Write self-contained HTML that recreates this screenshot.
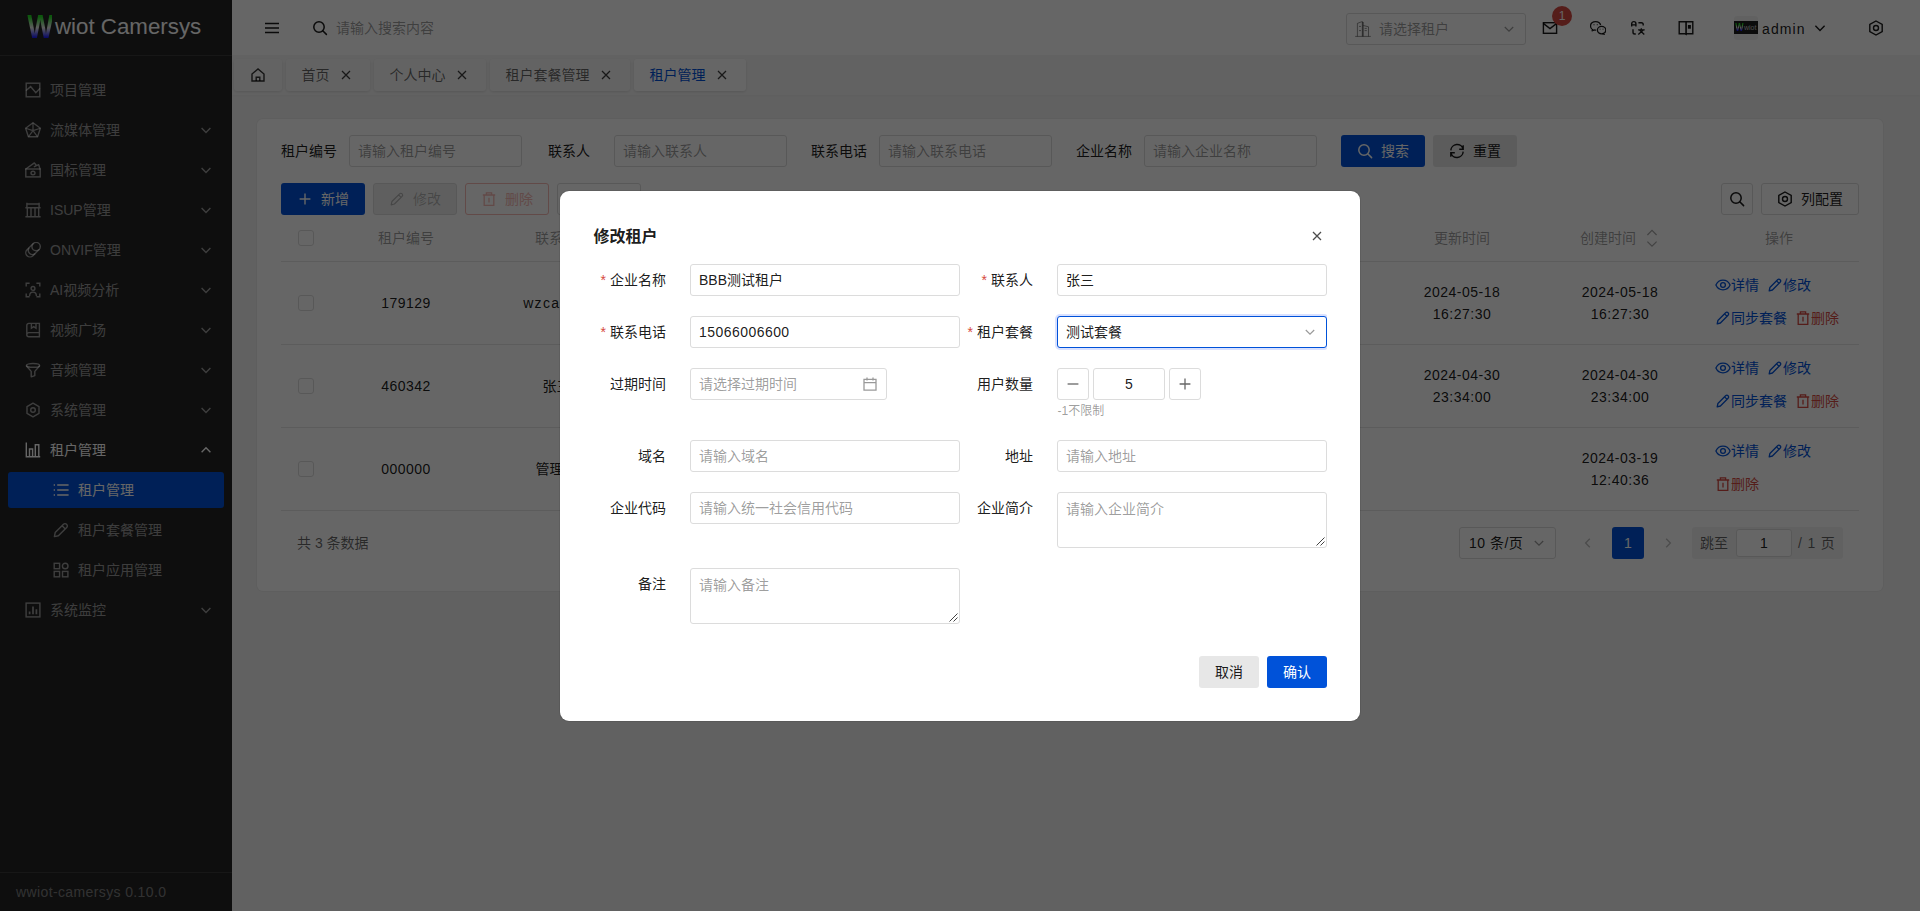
<!DOCTYPE html>
<html lang="zh-CN">
<head>
<meta charset="utf-8">
<title>租户管理 - wwiot Camersys</title>
<style>
*{box-sizing:border-box;margin:0;padding:0}
html,body{width:1920px;height:911px;overflow:hidden}
body{font-family:"Liberation Sans","Noto Sans CJK SC",sans-serif;font-size:14px;line-height:22px;color:rgba(0,0,0,.9);background:#f3f3f3;position:relative}
svg{display:block}
.abs{position:absolute}
/* ---------- sidebar ---------- */
#side{position:absolute;left:0;top:0;width:232px;height:911px;background:#242424;color:rgba(255,255,255,.55)}
#logo{position:absolute;left:0;top:0;width:232px;height:56px;border-bottom:1px solid #3a3a3a}
#logo .w{position:absolute;left:25px;top:7px;width:30px;height:40px;font-size:33px;line-height:40px;font-weight:bold;text-align:center;transform:scaleX(.84);transform-origin:14px 50%;background:linear-gradient(#22dd22 24%,#e8e8e8 52%,#0000ff 80%);-webkit-background-clip:text;background-clip:text;color:transparent}
#logo .t{position:absolute;left:55px;top:11px;font-size:22.3px;line-height:32px;color:#fff;white-space:nowrap}
.mi{position:absolute;left:8px;width:216px;height:36px;border-radius:3px}
.mi .ic{position:absolute;left:17px;top:10px;width:16px;height:16px}
.mi .tx{position:absolute;left:42px;top:7px;line-height:22px;white-space:nowrap}
.mi .ar{position:absolute;left:190px;top:10px;width:16px;height:16px}
.mi.sub .ic{left:45px}
.mi.sub .tx{left:70px}
.mi.on{background:#0052d9;color:#fff}
.mi.open{color:#fff}
#sfoot{position:absolute;left:0;top:872px;width:232px;height:39px;border-top:1px solid #3a3a3a;padding-left:16px;line-height:38px;color:rgba(255,255,255,.42);letter-spacing:.38px}
/* ---------- header ---------- */
#head{position:absolute;left:232px;top:0;width:1688px;height:55px;background:#fff}
#head .ph{position:absolute;left:104px;top:17px;line-height:22px;color:rgba(0,0,0,.4)}
#tsel{position:absolute;left:1114px;top:13px;width:180px;height:32px;border:1px solid #dcdcdc;border-radius:3px}
#tsel .ph2{position:absolute;left:32px;top:4px;line-height:22px;color:rgba(0,0,0,.4)}
#badge{position:absolute;left:1320px;top:6px;width:20px;height:20px;border-radius:10px;background:#d54941;color:#fff;font-size:12px;line-height:20px;text-align:center}
#avatar{position:absolute;left:1502px;top:16px;width:24px;height:24px;border-radius:3px;background:#f3f3f3;overflow:hidden}
#avatar i{position:absolute;left:0;top:5px;width:24px;height:13px;background:#1c1c1c;display:block}
#avatar b{position:absolute;left:0;top:5px;width:11px;text-align:center;font-size:11px;line-height:13px;font-weight:bold;font-style:normal;transform:scaleX(.8);transform-origin:5.5px 50%;background:linear-gradient(#22dd22 25%,#e8e8e8 50%,#0000ff 78%);-webkit-background-clip:text;background-clip:text;color:transparent}
#avatar em{position:absolute;left:10px;top:5px;font-size:7px;line-height:14px;color:#c4c4c4;font-style:normal}
#uname{position:absolute;left:1530px;top:17.5px;line-height:22px;letter-spacing:1.1px}
/* ---------- tabs ---------- */
#tabs{position:absolute;left:232px;top:55px;width:1688px;height:40px;background:#f6f6f6;box-shadow:0 1px 2px rgba(0,0,0,.04)}
.tab{position:absolute;top:4px;height:32px;background:#f8f8f8;border-radius:3px;box-shadow:0 1px 3px rgba(0,0,0,.12);color:rgba(0,0,0,.6);white-space:nowrap}
.tab span{position:absolute;left:15.5px;top:5px;line-height:22px}
.tab svg{position:absolute;right:16px;top:8px}
.tab.on{background:#fff;color:#0052d9}
/* ---------- card ---------- */
#card{position:absolute;left:257px;top:119px;width:1626px;height:472px;background:#fff;border-radius:6px;box-shadow:0 0 0 1px rgba(0,0,0,.03)}
.lb{position:absolute;top:21px;line-height:22px;white-space:nowrap}
.inp{position:absolute;height:32px;border:1px solid #dcdcdc;border-radius:3px;background:#fff;padding:4px 8px;line-height:22px;color:rgba(0,0,0,.4);white-space:nowrap;overflow:hidden}
.btn{position:absolute;height:32px;border-radius:3px;border:1px solid transparent;line-height:22px;white-space:nowrap}
.btn svg{position:absolute;left:15px;top:7px}
.btn span{position:absolute;left:39px;top:4px}
.btn.pri{background:#0052d9;color:#fff}
.btn.gray{background:#e7e7e7}
.btn.dis{background:#eee;color:rgba(0,0,0,.26);border-color:#dcdcdc}
.btn.dng{background:#fff;color:#f6b8b3;border-color:#f6b8b3}
.btn.out{background:#fff;border-color:#dcdcdc}
.th{position:absolute;top:108px;line-height:22px;color:rgba(0,0,0,.4);white-space:nowrap;transform:translateX(-50%)}
.hl{position:absolute;left:24px;width:1578px;height:1px;background:#e7e7e7}
.cb{position:absolute;left:41px;width:16px;height:16px;border:1px solid #dcdcdc;border-radius:3px;background:#fff}
.td{position:absolute;line-height:22px;text-align:center;white-space:nowrap;transform:translateX(-50%);letter-spacing:.5px}
.tl{position:absolute;line-height:22px;white-space:nowrap}
.op{position:absolute;height:22px;line-height:22px;white-space:nowrap;color:#0052d9}
.op svg{position:absolute;left:0;top:3px}
.op span{position:absolute;left:16px;top:0}
.op.red{color:#d54941}
/* ---------- overlay & dialog ---------- */
#mask{position:absolute;left:0;top:0;width:1920px;height:911px;background:rgba(0,0,0,.6)}
#dlg{position:absolute;left:560px;top:191px;width:800px;height:530px;background:#fff;border-radius:9px;box-shadow:0 0 0 1px rgba(0,0,0,.08)}
#dlg h3{position:absolute;left:33.5px;top:33.5px;font-size:16px;line-height:24px;font-weight:bold}
.fl{position:absolute;line-height:22px;text-align:right;white-space:nowrap}
.fl i{font-style:normal;color:#d54941;margin-right:4px;position:relative;top:0}
.fi{position:absolute;height:32px;border:1px solid #dcdcdc;border-radius:3px;background:#fff;padding:4px 8px;line-height:22px;white-space:nowrap}
.fi.ph,.ta{color:rgba(0,0,0,.4)}
.ta{position:absolute;width:270px;height:56px;border:1px solid #dcdcdc;border-radius:3px;background:#fff;padding:5px 8px;line-height:22px}
.ta svg{position:absolute;right:1px;bottom:1px}
</style>
</head>
<body>
<div id="side">
<div id="logo"><span class="w">W</span><span class="t">wiot Camersys</span></div>
<div class="mi" style="top:72px"><svg class="ic" width="16" height="16" viewBox="0 0 16 16" fill="none" stroke="currentColor" stroke-width="1.4" stroke-linejoin="round" stroke-linecap="round"><rect x="1.2" y="1.2" width="13.6" height="13.6" stroke-linejoin="miter"/><path d="M1.4 8.200 5.600 4.600 10.800 10.800 14.600 6.800" stroke-linejoin="miter"/></svg><span class="tx">项目管理</span></div>
<div class="mi" style="top:112px"><svg class="ic" width="16" height="16" viewBox="0 0 16 16" fill="none" stroke="currentColor" stroke-width="1.4" stroke-linejoin="round" stroke-linecap="round"><path d="M8 .8 15.400 6.200 12.600 14.800H3.400L.600 6.200Z"/><path d="M8 8.600V.8M8 8.600 15.400 6.200M8 8.600 12.600 14.800M8 8.600 3.400 14.800M8 8.600.600 6.200" stroke-width="1.200" stroke-linecap="butt"/></svg><span class="tx">流媒体管理</span><svg class="ar" width="16" height="16" viewBox="0 0 16 16" fill="none" stroke="currentColor" stroke-width="1.4" stroke-linejoin="round" stroke-linecap="round"><path d="M3.6 6 8 10.4 12.4 6" stroke-linecap="butt" stroke-linejoin="miter"/></svg></div>
<div class="mi" style="top:152px"><svg class="ic" width="16" height="16" viewBox="0 0 16 16" fill="none" stroke="currentColor" stroke-width="1.4" stroke-linejoin="round" stroke-linecap="round"><rect x=".8" y="7" width="14.400" height="7.900" stroke-linejoin="miter"/><path d="M.800 7 9.400.900 11.300 3.500M9.400 4.700 13.700 2.700 15 7"/><ellipse cx="8" cy="11" rx="2" ry="1.800"/></svg><span class="tx">国标管理</span><svg class="ar" width="16" height="16" viewBox="0 0 16 16" fill="none" stroke="currentColor" stroke-width="1.4" stroke-linejoin="round" stroke-linecap="round"><path d="M3.6 6 8 10.4 12.4 6" stroke-linecap="butt" stroke-linejoin="miter"/></svg></div>
<div class="mi" style="top:192px"><svg class="ic" width="16" height="16" viewBox="0 0 16 16" fill="none" stroke="currentColor" stroke-width="1.4" stroke-linejoin="round" stroke-linecap="round"><path d="M1.900.800V5.600M14.100.800V5.600M1.900 2h12.200M.400 5.700h15.200M.400 14.800h15.200M2.300 5.700v9.100M6 5.700v9.100M10 5.700v9.100M13.700 5.700v9.100" stroke-linecap="butt"/></svg><span class="tx">ISUP管理</span><svg class="ar" width="16" height="16" viewBox="0 0 16 16" fill="none" stroke="currentColor" stroke-width="1.4" stroke-linejoin="round" stroke-linecap="round"><path d="M3.6 6 8 10.4 12.4 6" stroke-linecap="butt" stroke-linejoin="miter"/></svg></div>
<div class="mi" style="top:232px"><svg class="ic" width="16" height="16" viewBox="0 0 16 16" fill="none" stroke="currentColor" stroke-width="1.4" stroke-linejoin="round" stroke-linecap="round"><circle cx="11.100" cy="4.600" r="4.200"/><path d="M8.130 1.630 2.030 7.730A4.200 4.200 0 0 0 7.970 13.670L14.070 7.570"/><path d="M3.830 6.330a4.200 4.200 0 0 0 5.940 5.540"/></svg><span class="tx">ONVIF管理</span><svg class="ar" width="16" height="16" viewBox="0 0 16 16" fill="none" stroke="currentColor" stroke-width="1.4" stroke-linejoin="round" stroke-linecap="round"><path d="M3.6 6 8 10.4 12.4 6" stroke-linecap="butt" stroke-linejoin="miter"/></svg></div>
<div class="mi" style="top:272px"><svg class="ic" width="16" height="16" viewBox="0 0 16 16" fill="none" stroke="currentColor" stroke-width="1.4" stroke-linejoin="round" stroke-linecap="round"><path d="M1.200 4.600V1.200h3.400M11.400 1.200h3.400v3.400M14.800 11.400v3.400h-3.400M4.600 14.800H1.200v-3.400" stroke-linejoin="miter" stroke-linecap="butt"/><circle cx="8" cy="6.400" r="1.900"/><path d="M4.700 13.400a3.300 3.300 0 0 1 6.600 0"/></svg><span class="tx">AI视频分析</span><svg class="ar" width="16" height="16" viewBox="0 0 16 16" fill="none" stroke="currentColor" stroke-width="1.4" stroke-linejoin="round" stroke-linecap="round"><path d="M3.6 6 8 10.4 12.4 6" stroke-linecap="butt" stroke-linejoin="miter"/></svg></div>
<div class="mi" style="top:312px"><svg class="ic" width="16" height="16" viewBox="0 0 16 16" fill="none" stroke="currentColor" stroke-width="1.4" stroke-linejoin="round" stroke-linecap="round"><path d="M1.800 3.400a2 2 0 0 1 2-2h10.600v13.400H3.800a2 2 0 0 1-2-2ZM1.800 12.600a2 2 0 0 1 2-2h10.600M6.400 1.400v4.800l2.300-1.600 2.300 1.600V1.400" stroke-linejoin="miter"/></svg><span class="tx">视频广场</span><svg class="ar" width="16" height="16" viewBox="0 0 16 16" fill="none" stroke="currentColor" stroke-width="1.4" stroke-linejoin="round" stroke-linecap="round"><path d="M3.6 6 8 10.4 12.4 6" stroke-linecap="butt" stroke-linejoin="miter"/></svg></div>
<div class="mi" style="top:352px"><svg class="ic" width="16" height="16" viewBox="0 0 16 16" fill="none" stroke="currentColor" stroke-width="1.4" stroke-linejoin="round" stroke-linecap="round"><ellipse cx="8" cy="3.400" rx="6.600" ry="1.900"/><path d="M1.500 4 6.200 9.400V14.800L9.800 13.600V9.400L14.500 4"/></svg><span class="tx">音频管理</span><svg class="ar" width="16" height="16" viewBox="0 0 16 16" fill="none" stroke="currentColor" stroke-width="1.4" stroke-linejoin="round" stroke-linecap="round"><path d="M3.6 6 8 10.4 12.4 6" stroke-linecap="butt" stroke-linejoin="miter"/></svg></div>
<div class="mi" style="top:392px"><svg class="ic" width="16" height="16" viewBox="0 0 16 16" fill="none" stroke="currentColor" stroke-width="1.4" stroke-linejoin="round" stroke-linecap="round"><path d="M8 1.2 14 4.6v6.8L8 14.8 2 11.4V4.6Z"/><circle cx="8" cy="8" r="2.3"/></svg><span class="tx">系统管理</span><svg class="ar" width="16" height="16" viewBox="0 0 16 16" fill="none" stroke="currentColor" stroke-width="1.4" stroke-linejoin="round" stroke-linecap="round"><path d="M3.6 6 8 10.4 12.4 6" stroke-linecap="butt" stroke-linejoin="miter"/></svg></div>
<div class="mi open" style="top:432px"><svg class="ic" width="16" height="16" viewBox="0 0 16 16" fill="none" stroke="currentColor" stroke-width="1.4" stroke-linejoin="round" stroke-linecap="round"><path d="M1.300.400V14.800H15.200" stroke-linejoin="miter" stroke-linecap="butt"/><path d="M4.500 14.800V7h3.100v7.800M10.300 14.800V2.800h3.500v12" stroke-linejoin="miter" stroke-linecap="butt"/></svg><span class="tx">租户管理</span><svg class="ar" width="16" height="16" viewBox="0 0 16 16" fill="none" stroke="currentColor" stroke-width="1.4" stroke-linejoin="round" stroke-linecap="round"><path d="M3.6 10.2 8 5.8 12.4 10.2" stroke-linecap="butt" stroke-linejoin="miter"/></svg></div>
<div class="mi sub on" style="top:472px"><svg class="ic" width="16" height="16" viewBox="0 0 16 16" fill="none" stroke="currentColor" stroke-width="1.4" stroke-linejoin="round" stroke-linecap="round"><path d="M4.200 3h11.400M4.200 8h11.400M4.200 13h11.400M.700 3h1.300M.700 8h1.300M.700 13h1.300" stroke-linecap="butt"/></svg><span class="tx">租户管理</span></div>
<div class="mi sub" style="top:512px"><svg class="ic" width="16" height="16" viewBox="0 0 16 16" fill="none" stroke="currentColor" stroke-width="1.4" stroke-linejoin="round" stroke-linecap="round"><path d="M1.400 14.600 2.200 10.600 10.500 2.300a2.100 2.100 0 0 1 3 0l.200.200a2.100 2.100 0 0 1 0 3L5.400 13.800ZM9.100 3.700 12.300 6.900"/></svg><span class="tx">租户套餐管理</span></div>
<div class="mi sub" style="top:552px"><svg class="ic" width="16" height="16" viewBox="0 0 16 16" fill="none" stroke="currentColor" stroke-width="1.4" stroke-linejoin="round" stroke-linecap="round"><rect x="1.200" y="1.300" width="5.400" height="5.400" stroke-linejoin="miter"/><circle cx="12.200" cy="4" r="2.800"/><rect x="1.200" y="9.400" width="5.400" height="5.400" stroke-linejoin="miter"/><rect x="9.500" y="9.400" width="5.400" height="5.400" stroke-linejoin="miter"/></svg><span class="tx">租户应用管理</span></div>
<div class="mi" style="top:592px"><svg class="ic" width="16" height="16" viewBox="0 0 16 16" fill="none" stroke="currentColor" stroke-width="1.4" stroke-linejoin="round" stroke-linecap="round"><rect x="1.100" y="1.100" width="13.800" height="13.800" stroke-linejoin="miter"/><path d="M4.600 12.200V9.400M8 12.200V4.400M11.400 12.200V7.200" stroke-linecap="butt" stroke-width="1.700"/></svg><span class="tx">系统监控</span><svg class="ar" width="16" height="16" viewBox="0 0 16 16" fill="none" stroke="currentColor" stroke-width="1.4" stroke-linejoin="round" stroke-linecap="round"><path d="M3.6 6 8 10.4 12.4 6" stroke-linecap="butt" stroke-linejoin="miter"/></svg></div>
<div id="sfoot">wwiot-camersys 0.10.0</div>
</div>
<div id="head">
<svg class="abs" style="left:31.5px;top:20px;color:rgba(0,0,0,.9)" width="16" height="16" viewBox="0 0 16 16" fill="none" stroke="currentColor" stroke-width="1.5" stroke-linejoin="round" stroke-linecap="round" ><path d="M1 3.6h14M1 8h14M1 12.4h14" stroke-linecap="butt"/></svg>
<svg class="abs" style="left:79.5px;top:20px;color:rgba(0,0,0,.9)" width="16" height="16" viewBox="0 0 16 16" fill="none" stroke="currentColor" stroke-width="1.5" stroke-linejoin="round" stroke-linecap="round" ><circle cx="7" cy="7" r="5.2"/><path d="M11 11 14.4 14.400"/></svg>
<span class="ph">请输入搜索内容</span>
<div id="tsel"><svg class="abs" style="left:8px;top:7px;color:rgba(0,0,0,.42)" width="16" height="16" viewBox="0 0 16 16" fill="none" stroke="currentColor" stroke-width="1" stroke-linejoin="round" stroke-linecap="round" ><path d="M.2 15.4h15.6M2.4 15.4V2.4L7 .6 8 1v14.400M8.400 4.500l5.100 1.300v9.600" stroke-linecap="butt"/><path d="M7.600 1v14.400" stroke-width="1.600" stroke-linecap="butt"/><path d="M4 5.400h2M4 9.600h2M9.600 7.400h2.200M9.600 9.600h2.200" stroke-width="1" stroke-linecap="butt"/></svg><span class="ph2">请选择租户</span><svg class="abs" style="left:154px;top:7px;color:rgba(0,0,0,.4)" width="16" height="16" viewBox="0 0 16 16" fill="none" stroke="currentColor" stroke-width="1.2" stroke-linejoin="round" stroke-linecap="round" ><path d="M3.8 6 8 10.2 12.2 6" stroke-linecap="butt" stroke-linejoin="miter"/></svg></div>
<svg class="abs" style="left:1310px;top:20px;color:rgba(0,0,0,.9)" width="16" height="16" viewBox="0 0 16 16" fill="none" stroke="currentColor" stroke-width="1.4" stroke-linejoin="round" stroke-linecap="round" ><rect x="1.4" y="2.7" width="13.2" height="10.6" stroke-linejoin="miter"/><path d="M1.6 3.6 8 8.6 14.4 3.6" stroke-linejoin="miter"/></svg>
<div id="badge">1</div>
<svg class="abs" style="left:1358px;top:20px;color:rgba(0,0,0,.9)" width="16" height="16" viewBox="0 0 16 16" fill="none" stroke="currentColor" stroke-width="1.3" stroke-linejoin="round" stroke-linecap="round" ><ellipse cx="5.600" cy="5.900" rx="5.100" ry="4.300"/><path d="M2.500 9.400 1.900 11.100 4.200 10.100" stroke-width="1" fill="#fff"/><ellipse cx="11.600" cy="10.100" rx="4.300" ry="3.800" fill="#fff" stroke="#fff" stroke-width="2.600"/><ellipse cx="11.600" cy="10.100" rx="4.200" ry="3.700" fill="#fff"/><path d="M13.400 13.400 14.500 14.500 12.400 13.800" stroke-width="1" fill="#fff"/><path d="M4 4.300v.9M7.300 4.300v.9M10.100 8.700v.9M13 8.700v.9" stroke-width="1.200" stroke="rgba(0,0,0,.75)" stroke-linecap="butt"/></svg>
<svg class="abs" style="left:1398px;top:20px;color:rgba(0,0,0,.9)" width="16" height="16" viewBox="0 0 16 16" fill="none" stroke="currentColor" stroke-width="1.4" stroke-linejoin="round" stroke-linecap="round" ><path d="M1.700 6.600V3.700a2.100 2.100 0 0 1 4.200 0V6.600M1.700 4.900h4.200M8.400 2.800h3a1.800 1.800 0 0 1 1.800 1.800v.9M3 9.300v2.900a1.800 1.800 0 0 0 1.800 1.800h1" stroke-linecap="butt" stroke-linejoin="miter"/><path d="M8.100 9.800h6.600M11.300 8.300v1.300M9.500 10 14.300 14.500M13.300 10 8.300 14.500" stroke-linecap="butt" stroke-width="1.300"/></svg>
<svg class="abs" style="left:1446px;top:20px;color:rgba(0,0,0,.9)" width="16" height="16" viewBox="0 0 16 16" fill="none" stroke="currentColor" stroke-width="1.4" stroke-linejoin="round" stroke-linecap="round" ><path d="M1.200 1.700H8V14.300L6.800 13.700H1.200ZM8 1.700h6.800v12H9.200L8 14.300" stroke-linejoin="miter"/><path d="M8.300 1.700v12.400" stroke-width="1.100" stroke="rgba(0,0,0,.55)"/><rect x="9.900" y="5" width="3" height="3.700" fill="currentColor" stroke="none"/></svg>
<div id="avatar"><i></i><b>W</b><em>wiot</em></div><span id="uname">admin</span>
<svg class="abs" style="left:1580px;top:20px;color:rgba(0,0,0,.9)" width="16" height="16" viewBox="0 0 16 16" fill="none" stroke="currentColor" stroke-width="1.4" stroke-linejoin="round" stroke-linecap="round" ><path d="M3.400 5.800 8 10.400 12.600 5.800" stroke-linecap="butt" stroke-linejoin="miter"/></svg>
<svg class="abs" style="left:1636px;top:20px;color:rgba(0,0,0,.9)" width="16" height="16" viewBox="0 0 16 16" fill="none" stroke="currentColor" stroke-width="1.4" stroke-linejoin="round" stroke-linecap="round" ><path d="M8 1 14.200 4.500v7L8 15 1.800 11.500v-7Z" stroke-linejoin="miter"/><circle cx="8" cy="8" r="2.500"/></svg>
</div>
<div id="tabs">
<div class="tab" style="left:2px;width:48px"><svg style="left:16px;right:auto" width="16" height="16" viewBox="0 0 16 16" fill="none" stroke="rgba(0,0,0,.8)" stroke-width="1.400"><path d="M2 7 8 2 14 7v7H2Z" stroke-linejoin="miter"/><path d="M6.200 14v-3.800h3.600V14"/></svg></div>
<div class="tab" style="left:54px;width:84px"><span>首页</span><svg width="16" height="16" viewBox="0 0 16 16" fill="none" stroke="rgba(0,0,0,.75)" stroke-width="1.300"><path d="M4 4 12 12M12 4 4 12"/></svg></div>
<div class="tab" style="left:142px;width:112px"><span>个人中心</span><svg width="16" height="16" viewBox="0 0 16 16" fill="none" stroke="rgba(0,0,0,.75)" stroke-width="1.300"><path d="M4 4 12 12M12 4 4 12"/></svg></div>
<div class="tab" style="left:258px;width:140px"><span>租户套餐管理</span><svg width="16" height="16" viewBox="0 0 16 16" fill="none" stroke="rgba(0,0,0,.75)" stroke-width="1.300"><path d="M4 4 12 12M12 4 4 12"/></svg></div>
<div class="tab on" style="left:402px;width:112px"><span>租户管理</span><svg width="16" height="16" viewBox="0 0 16 16" fill="none" stroke="rgba(0,0,0,.75)" stroke-width="1.300"><path d="M4 4 12 12M12 4 4 12"/></svg></div>
</div>
<div id="card">
<span class="lb" style="left:24px">租户编号</span><div class="inp" style="left:92px;top:16px;width:173px">请输入租户编号</div>
<span class="lb" style="left:291px">联系人</span><div class="inp" style="left:357px;top:16px;width:173px">请输入联系人</div>
<span class="lb" style="left:554px">联系电话</span><div class="inp" style="left:622px;top:16px;width:173px">请输入联系电话</div>
<span class="lb" style="left:819px">企业名称</span><div class="inp" style="left:887px;top:16px;width:173px">请输入企业名称</div>
<div class="btn pri" style="left:1084px;top:16px;width:84px"><svg width="16" height="16" viewBox="0 0 16 16" fill="none" stroke="currentColor" stroke-width="1.5" stroke-linejoin="round" stroke-linecap="round"><circle cx="7" cy="7" r="5.2"/><path d="M11 11 14.600 14.600"/></svg><span>搜索</span></div>
<div class="btn gray" style="left:1176px;top:16px;width:84px"><svg width="16" height="16" viewBox="0 0 16 16" fill="none" stroke="currentColor" stroke-width="1.4" stroke-linejoin="round" stroke-linecap="round"><path d="M14.200 6.300A6.300 6.300 0 0 0 1.800 7.400M1.800 9.700A6.300 6.300 0 0 0 14.200 8.600M14.200 2.300v4h-4M1.800 13.700v-4h4" stroke-linejoin="miter" stroke-linecap="butt"/></svg><span>重置</span></div>
<div class="btn pri" style="left:24px;top:64px;width:84px"><svg width="16" height="16" viewBox="0 0 16 16" fill="none" stroke="currentColor" stroke-width="1.4" stroke-linejoin="round" stroke-linecap="round"><path d="M8 2.600v10.800M2.600 8h10.800" stroke-linecap="butt"/></svg><span>新增</span></div>
<div class="btn dis" style="left:116px;top:64px;width:84px"><svg width="16" height="16" viewBox="0 0 16 16" fill="none" stroke="currentColor" stroke-width="1.2" stroke-linejoin="round" stroke-linecap="round"><path d="M2.200 13.800l.700-3.300 7.700-7.700a1.700 1.700 0 0 1 2.500 2.500l-7.700 7.700ZM9.600 3.900l2.500 2.500"/></svg><span>修改</span></div>
<div class="btn dng" style="left:208px;top:64px;width:84px"><svg width="16" height="16" viewBox="0 0 16 16" fill="none" stroke="currentColor" stroke-width="1.3" stroke-linejoin="round" stroke-linecap="round"><path d="M1.800 4h12.400M5.400 4V1.800h5.200V4M3.200 4v10.400h9.600V4M8 6.800v4.800" stroke-linejoin="miter" stroke-linecap="butt"/></svg><span>删除</span></div>
<div class="btn out" style="left:300px;top:64px;width:84px"><svg width="16" height="16" viewBox="0 0 16 16" fill="none" stroke="currentColor" stroke-width="1.3" stroke-linejoin="round" stroke-linecap="round"><path d="M8 2v8M4.600 7 8 10.400 11.400 7M2.400 13.600h11.200" stroke-linecap="butt" stroke-linejoin="miter"/></svg><span>导出</span></div>
<div class="btn out" style="left:1464px;top:64px;width:32px"><svg style="left:7px" width="16" height="16" viewBox="0 0 16 16" fill="none" stroke="currentColor" stroke-width="1.5" stroke-linejoin="round" stroke-linecap="round"><circle cx="7" cy="7" r="5.2"/><path d="M11 11 14.600 14.600"/></svg></div>
<div class="btn out" style="left:1504px;top:64px;width:98px"><svg width="16" height="16" viewBox="0 0 16 16" fill="none" stroke="currentColor" stroke-width="1.4" stroke-linejoin="round" stroke-linecap="round"><path d="M8 1 14.200 4.500v7L8 15 1.800 11.500v-7Z" stroke-linejoin="miter"/><circle cx="8" cy="8" r="2.500"/></svg><span>列配置</span></div>
<div class="cb" style="top:111px"></div>
<span class="th" style="left:149px">租户编号</span>
<span class="th" style="left:299px">联系人</span>
<span class="th" style="left:449px">联系电话</span>
<span class="th" style="left:599px">企业名称</span>
<span class="th" style="left:749px">租户套餐</span>
<span class="th" style="left:899px">过期时间</span>
<span class="th" style="left:1049px">用户数量</span>
<span class="th" style="left:1205px">更新时间</span>
<span class="th" style="left:1351px">创建时间</span>
<span class="th" style="left:1522px">操作</span>
<svg class="abs" style="left:1387px;top:109px" width="16" height="20" viewBox="0 0 16 20" fill="none" stroke="rgba(0,0,0,.35)" stroke-width="1.200"><path d="M3.400 7 8 2.400 12.600 7M3.400 13.600 8 18.200 12.600 13.600"/></svg>
<div class="hl" style="top:142px"></div>
<div class="cb" style="top:176px"></div>
<span class="td" style="left:149px;top:173px">179129</span>
<span class="td" style="left:302.5px;top:173px;letter-spacing:1.3px">wzcaoyan</span>
<span class="td" style="left:449px;top:173px;letter-spacing:0">13800138000</span>
<span class="td" style="left:599px;top:173px;letter-spacing:0">AAA测试租户</span>
<span class="td" style="left:749px;top:173px;letter-spacing:0">测试套餐</span>
<span class="td" style="left:899px;top:173px;letter-spacing:0">2025-05-18</span>
<span class="td" style="left:1049px;top:173px;letter-spacing:0">10</span>
<span class="td" style="left:1205px;top:162px">2024-05-18<br>16:27:30</span>
<span class="td" style="left:1363px;top:162px">2024-05-18<br>16:27:30</span>
<a class="op" style="left:1458px;top:155px;width:44px"><svg width="16" height="16" viewBox="0 0 16 16" fill="none" stroke="currentColor" stroke-width="1.3" stroke-linejoin="round" stroke-linecap="round"><path d="M.900 8C2.400 4.800 5 3.200 8 3.200S13.600 4.800 15.100 8C13.600 11.200 11 12.800 8 12.800S2.400 11.200.900 8Z"/><circle cx="8" cy="8" r="2.400"/></svg><span>详情</span></a>
<a class="op" style="left:1510px;top:155px;width:44px"><svg width="16" height="16" viewBox="0 0 16 16" fill="none" stroke="currentColor" stroke-width="1.3" stroke-linejoin="round" stroke-linecap="round"><path d="M2.200 13.800l.700-3.300 7.700-7.700a1.700 1.700 0 0 1 2.500 2.500l-7.700 7.700ZM9.600 3.900l2.500 2.500"/></svg><span>修改</span></a>
<a class="op" style="left:1458px;top:188px;width:72px"><svg width="16" height="16" viewBox="0 0 16 16" fill="none" stroke="currentColor" stroke-width="1.3" stroke-linejoin="round" stroke-linecap="round"><path d="M2.200 13.800l.700-3.300 7.700-7.700a1.700 1.700 0 0 1 2.500 2.500l-7.700 7.700ZM9.600 3.900l2.500 2.500"/></svg><span>同步套餐</span></a>
<a class="op red" style="left:1538px;top:188px;width:44px"><svg width="16" height="16" viewBox="0 0 16 16" fill="none" stroke="currentColor" stroke-width="1.3" stroke-linejoin="round" stroke-linecap="round"><path d="M1.800 4h12.400M5.400 4V1.800h5.200V4M3.200 4v10.400h9.600V4M8 6.800v4.800" stroke-linejoin="miter" stroke-linecap="butt"/></svg><span>删除</span></a>
<div class="hl" style="top:225px"></div>
<div class="cb" style="top:259px"></div>
<span class="td" style="left:149px;top:256px">460342</span>
<span class="td" style="left:299.5px;top:256px;letter-spacing:0">张三</span>
<span class="td" style="left:449px;top:256px;letter-spacing:0">15066006600</span>
<span class="td" style="left:599px;top:256px;letter-spacing:0">BBB测试租户</span>
<span class="td" style="left:749px;top:256px;letter-spacing:0">测试套餐</span>
<span class="td" style="left:1049px;top:256px;letter-spacing:0">5</span>
<span class="td" style="left:1205px;top:245px">2024-04-30<br>23:34:00</span>
<span class="td" style="left:1363px;top:245px">2024-04-30<br>23:34:00</span>
<a class="op" style="left:1458px;top:238px;width:44px"><svg width="16" height="16" viewBox="0 0 16 16" fill="none" stroke="currentColor" stroke-width="1.3" stroke-linejoin="round" stroke-linecap="round"><path d="M.900 8C2.400 4.800 5 3.200 8 3.200S13.600 4.800 15.100 8C13.600 11.200 11 12.800 8 12.800S2.400 11.200.900 8Z"/><circle cx="8" cy="8" r="2.400"/></svg><span>详情</span></a>
<a class="op" style="left:1510px;top:238px;width:44px"><svg width="16" height="16" viewBox="0 0 16 16" fill="none" stroke="currentColor" stroke-width="1.3" stroke-linejoin="round" stroke-linecap="round"><path d="M2.200 13.800l.700-3.300 7.700-7.700a1.700 1.700 0 0 1 2.500 2.500l-7.700 7.700ZM9.600 3.900l2.500 2.500"/></svg><span>修改</span></a>
<a class="op" style="left:1458px;top:271px;width:72px"><svg width="16" height="16" viewBox="0 0 16 16" fill="none" stroke="currentColor" stroke-width="1.3" stroke-linejoin="round" stroke-linecap="round"><path d="M2.200 13.800l.700-3.300 7.700-7.700a1.700 1.700 0 0 1 2.500 2.500l-7.700 7.700ZM9.600 3.900l2.500 2.500"/></svg><span>同步套餐</span></a>
<a class="op red" style="left:1538px;top:271px;width:44px"><svg width="16" height="16" viewBox="0 0 16 16" fill="none" stroke="currentColor" stroke-width="1.3" stroke-linejoin="round" stroke-linecap="round"><path d="M1.800 4h12.400M5.400 4V1.800h5.200V4M3.200 4v10.400h9.600V4M8 6.800v4.800" stroke-linejoin="miter" stroke-linecap="butt"/></svg><span>删除</span></a>
<div class="hl" style="top:308px"></div>
<div class="cb" style="top:342px"></div>
<span class="td" style="left:149px;top:339px">000000</span>
<span class="td" style="left:299.5px;top:339px;letter-spacing:0">管理员</span>
<span class="td" style="left:599px;top:339px;letter-spacing:0">管理组</span>
<span class="td" style="left:1363px;top:328px">2024-03-19<br>12:40:36</span>
<a class="op" style="left:1458px;top:321px;width:44px"><svg width="16" height="16" viewBox="0 0 16 16" fill="none" stroke="currentColor" stroke-width="1.3" stroke-linejoin="round" stroke-linecap="round"><path d="M.900 8C2.400 4.800 5 3.200 8 3.200S13.600 4.800 15.100 8C13.600 11.200 11 12.800 8 12.800S2.400 11.200.900 8Z"/><circle cx="8" cy="8" r="2.400"/></svg><span>详情</span></a>
<a class="op" style="left:1510px;top:321px;width:44px"><svg width="16" height="16" viewBox="0 0 16 16" fill="none" stroke="currentColor" stroke-width="1.3" stroke-linejoin="round" stroke-linecap="round"><path d="M2.200 13.800l.700-3.300 7.700-7.700a1.700 1.700 0 0 1 2.500 2.500l-7.700 7.700ZM9.600 3.900l2.500 2.500"/></svg><span>修改</span></a>
<a class="op red" style="left:1458px;top:354px;width:44px"><svg width="16" height="16" viewBox="0 0 16 16" fill="none" stroke="currentColor" stroke-width="1.3" stroke-linejoin="round" stroke-linecap="round"><path d="M1.800 4h12.400M5.400 4V1.800h5.200V4M3.200 4v10.400h9.600V4M8 6.800v4.800" stroke-linejoin="miter" stroke-linecap="butt"/></svg><span>删除</span></a>
<div class="hl" style="top:391px"></div>
<span class="tl" style="left:40px;top:413px;color:rgba(0,0,0,.6)">共 3 条数据</span>
<div class="inp" style="left:1202px;top:408px;width:97px;color:rgba(0,0,0,.9);padding-left:9px;letter-spacing:.5px">10 条/页<svg style="position:absolute;right:8px;top:7px;color:rgba(0,0,0,.4)" width="16" height="16" viewBox="0 0 16 16" fill="none" stroke="currentColor" stroke-width="1.2" stroke-linejoin="round" stroke-linecap="round"><path d="M3.800 6 8 10.200 12.200 6" stroke-linecap="butt" stroke-linejoin="miter"/></svg></div>
<svg class="abs" style="left:1323px;top:416px" width="16" height="16" viewBox="0 0 16 16" fill="none" stroke="rgba(0,0,0,.26)" stroke-width="1.300"><path d="M9.800 3.800 5.600 8l4.200 4.200"/></svg>
<div class="abs" style="left:1355px;top:408px;width:32px;height:32px;border-radius:3px;background:#0052d9;color:#fff;text-align:center;line-height:32px">1</div>
<svg class="abs" style="left:1403px;top:416px" width="16" height="16" viewBox="0 0 16 16" fill="none" stroke="rgba(0,0,0,.26)" stroke-width="1.300"><path d="M6.200 3.800 10.400 8l-4.200 4.200"/></svg>
<div class="abs" style="left:1435px;top:408px;width:151px;height:32px;border-radius:3px;background:#f3f3f3;color:rgba(0,0,0,.6)"><span class="tl" style="left:8px;top:5px">跳至</span><div class="inp" style="left:44px;top:2px;width:56px;height:28px;padding:2px 0;text-align:center;color:rgba(0,0,0,.9)">1</div><span class="tl" style="left:106px;top:5px;letter-spacing:.8px">/ 1 页</span></div>
</div>
<div id="mask"></div>
<div id="dlg">
<h3>修改租户</h3>
<svg class="abs" style="left:749px;top:37px" width="16" height="16" viewBox="0 0 16 16" fill="none" stroke="rgba(0,0,0,.7)" stroke-width="1.300"><path d="M4 4 12 12M12 4 4 12"/></svg>
<label class="fl" style="left:0px;top:78px;width:106px"><i>*</i>企业名称</label>
<div class="fi" style="left:130px;top:73px;width:270px">BBB测试租户</div>
<label class="fl" style="left:367px;top:78px;width:106px"><i>*</i>联系人</label>
<div class="fi" style="left:497px;top:73px;width:270px">张三</div>
<label class="fl" style="left:0px;top:130px;width:106px"><i>*</i>联系电话</label>
<div class="fi" style="left:130px;top:125px;width:270px;letter-spacing:.45px">15066006600</div>
<label class="fl" style="left:367px;top:130px;width:106px"><i>*</i>租户套餐</label>
<div class="fi" style="left:497px;top:125px;width:270px;border-color:#0052d9;box-shadow:0 0 0 2px #d9e1ff;clip-path:inset(-3px 0 -3px -3px)">测试套餐<svg class="abs" style="right:8px;top:7px" width="16" height="16" viewBox="0 0 16 16" fill="none" stroke="rgba(0,0,0,.4)" stroke-width="1.200"><path d="M3.800 6 8 10.200 12.200 6"/></svg></div>
<label class="fl" style="left:0px;top:182px;width:106px">过期时间</label>
<div class="fi ph" style="left:130px;top:177px;width:197px">请选择过期时间<svg class="abs" style="right:8px;top:7px" width="16" height="16" viewBox="0 0 16 16" fill="none" stroke="rgba(0,0,0,.4)" stroke-width="1.300"><path d="M2 3.400h12v10.800H2ZM2 6.600h12M5 1.600v2.800M11 1.600v2.800"/></svg></div>
<label class="fl" style="left:367px;top:182px;width:106px">用户数量</label>
<div class="fi" style="left:497px;top:177px;width:32px;padding:0"><svg class="abs" style="left:7px;top:7px" width="16" height="16" viewBox="0 0 16 16" fill="none" stroke="rgba(0,0,0,.6)" stroke-width="1.300"><path d="M2.600 8h10.800"/></svg></div>
<div class="fi" style="left:533px;top:177px;width:72px;text-align:center">5</div>
<div class="fi" style="left:609px;top:177px;width:32px;padding:0"><svg class="abs" style="left:7px;top:7px" width="16" height="16" viewBox="0 0 16 16" fill="none" stroke="rgba(0,0,0,.6)" stroke-width="1.300"><path d="M2.600 8h10.800M8 2.600v10.800"/></svg></div>
<div class="abs" style="left:497.5px;top:210px;font-size:12px;line-height:20px;color:rgba(0,0,0,.4)">-1不限制</div>
<label class="fl" style="left:0px;top:254px;width:106px">域名</label>
<div class="fi ph" style="left:130px;top:249px;width:270px">请输入域名</div>
<label class="fl" style="left:367px;top:254px;width:106px">地址</label>
<div class="fi ph" style="left:497px;top:249px;width:270px">请输入地址</div>
<label class="fl" style="left:0px;top:306px;width:106px">企业代码</label>
<div class="fi ph" style="left:130px;top:301px;width:270px">请输入统一社会信用代码</div>
<label class="fl" style="left:367px;top:306px;width:106px">企业简介</label>
<div class="ta" style="left:497px;top:301px">请输入企业简介<svg width="10" height="10" viewBox="0 0 10 10" fill="none" stroke="#444" stroke-width="1"><path d="M9.500 1.500 1.500 9.500M9.500 5.500 5.500 9.500"/></svg></div>
<label class="fl" style="left:0px;top:382px;width:106px">备注</label>
<div class="ta" style="left:130px;top:377px">请输入备注<svg width="10" height="10" viewBox="0 0 10 10" fill="none" stroke="#444" stroke-width="1"><path d="M9.500 1.500 1.500 9.500M9.500 5.500 5.500 9.500"/></svg></div>
<div class="btn gray" style="left:639px;top:465px;width:60px;text-align:center;padding-top:4px">取消</div>
<div class="btn pri" style="left:707px;top:465px;width:60px;text-align:center;padding-top:4px">确认</div>
</div>
</body>
</html>
